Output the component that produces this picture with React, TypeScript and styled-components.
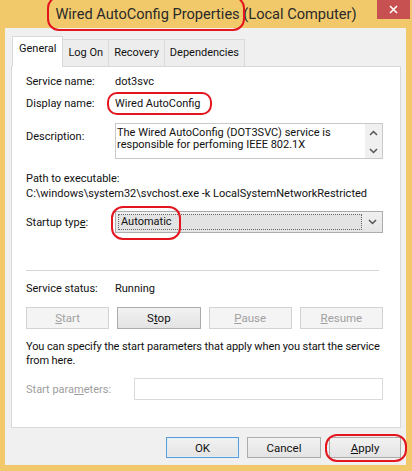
import React from 'react';
import styled, { createGlobalStyle } from 'styled-components';

const Global = createGlobalStyle`
  html, body { margin: 0; padding: 0; background: #F1C96B; }
  body { font-family: Roboto, "Liberation Sans", sans-serif; }
  * { box-sizing: border-box; }
`;

const Window = styled.div`
  width: 412px;
  height: 471px;
  background: #F1C96B;
  display: flex;
  flex-direction: column;
`;

const TitleBar = styled.div`
  height: 28px;
  display: grid;
  grid-template-columns: 1fr auto 1fr;
  align-items: center;
`;

const Title = styled.div`
  grid-column: 2;
  font-size: 14.6px;
  color: #2a2a2a;
  white-space: nowrap;
`;

const CloseButton = styled.div`
  grid-column: 3;
  justify-self: end;
  align-self: start;
  width: 33px;
  height: 19px;
  margin-right: 2px;
  background: #C75050;
  display: flex;
  align-items: center;
  justify-content: center;
`;

const Circled = styled.span<{ $inset: string; $radius?: string }>`
  position: relative;
  display: inline-block;
  &::after {
    content: '';
    position: absolute;
    inset: ${(p) => p.$inset};
    border: 2.5px solid #E3151E;
    border-radius: ${(p) => p.$radius ?? '12px'};
    pointer-events: none;
  }
`;

const Body = styled.div`
  flex: 1;
  margin: 0 6px 6px 5px;
  background: #F0F0F0;
  padding: 8px 5px 0 6px;
  display: flex;
  flex-direction: column;
  font-size: 11px;
  color: #111;
`;

const TabStrip = styled.div`
  display: flex;
  align-items: flex-end;
  padding-left: 1px;
  margin-bottom: -1px;
  position: relative;
  z-index: 1;
`;

const Tab = styled.div<{ $active?: boolean }>`
  height: ${(p) => (p.$active ? '31px' : '28px')};
  padding: ${(p) => (p.$active ? '4px 6px 0' : '5px 5px 0')};
  line-height: 15px;
  background: ${(p) => (p.$active ? '#FFFFFF' : '#EDEDED')};
  border: 1px solid #D9D9D9;
  border-bottom-color: ${(p) => (p.$active ? '#FFFFFF' : '#D9D9D9')};
  margin-left: ${(p) => (p.$active ? '0' : '-1px')};
  color: #111;
`;

const Panel = styled.div`
  height: 362px;
  background: #FFFFFF;
  border: 1px solid #D9D9D9;
  padding: 0 17px 0 14px;
  display: flex;
  flex-direction: column;
`;

const Row = styled.div<{ $top: number; $label?: number; $align?: string }>`
  display: grid;
  grid-template-columns: ${(p) => p.$label ?? 89}px 1fr;
  align-items: ${(p) => p.$align ?? 'center'};
  margin-top: ${(p) => p.$top}px;
  line-height: 15px;
`;

const Label = styled.span<{ $disabled?: boolean; $offset?: number }>`
  color: ${(p) => (p.$disabled ? '#9D9D9D' : '#111')};
  padding-top: ${(p) => p.$offset ?? 0}px;
`;

const Value = styled.span``;

const TextLine = styled.div<{ $top?: number }>`
  margin-top: ${(p) => p.$top ?? 0}px;
  line-height: 15px;
  white-space: nowrap;
`;

const DescBox = styled.div`
  height: 36px;
  border: 1px solid #C9C9C9;
  display: grid;
  grid-template-columns: 1fr 17px;
  overflow: hidden;
`;

const DescText = styled.div`
  padding: 3px 0 0 1px;
  line-height: 11.5px;
  white-space: pre-line;
  overflow: hidden;
`;

const ScrollBar = styled.div`
  background: #F0F0F0;
  display: flex;
  flex-direction: column;
  align-items: center;
  justify-content: space-between;
  padding: 6px 0 4px;
`;

const Combo = styled.div`
  height: 22px;
  border: 1px solid #ACACAC;
  background: linear-gradient(#F0F0F0, #E5E5E5);
  display: grid;
  grid-template-columns: 1fr 20px;
  align-items: center;
  padding: 2px 0 2px 2px;
`;

const ComboField = styled.div`
  height: 16px;
  border: 1px dotted #6a6a6a;
  background: #E3E3E3;
  line-height: 14px;
  padding-left: 2px;
`;

const ComboArrow = styled.div`
  display: flex;
  justify-content: center;
`;

const Separator = styled.div`
  height: 2px;
  margin: 37px 4px 0 0;
  border-top: 1px solid #D5D5D5;
  border-bottom: 1px solid #FFFFFF;
`;

const ButtonRow = styled.div`
  display: grid;
  grid-template-columns: repeat(4, 1fr);
  gap: 8px;
  margin-top: 11px;
`;

const Button = styled.div<{ $variant?: 'normal' | 'default' | 'disabled'; $width?: number }>`
  height: ${(p) => (p.$width ? 21 : 22)}px;
  ${(p) => (p.$width ? `width: ${p.$width}px;` : '')}
  display: flex;
  align-items: center;
  justify-content: center;
  font-size: 11.5px;
  border: 1px solid
    ${(p) =>
      p.$variant === 'disabled' ? '#D3D3D3' : p.$variant === 'default' ? '#5A9BD8' : '#ACACAC'};
  background: ${(p) =>
    p.$variant === 'disabled' ? '#F4F4F4' : 'linear-gradient(#F2F2F2, #E3E3E3)'};
  color: ${(p) => (p.$variant === 'disabled' ? '#A0A0A0' : '#111')};
  ${(p) => (p.$variant === 'default' ? 'box-shadow: inset 0 0 0 1px #E0EEFA;' : '')}
`;

const Paragraph = styled.div`
  margin-top: 11px;
  line-height: 14px;
  white-space: nowrap;
  letter-spacing: -0.1px;
`;

const ParamInput = styled.div`
  height: 22px;
  border: 1px solid #DADADA;
  background: #FFFFFF;
`;

const Footer = styled.div`
  display: flex;
  justify-content: flex-end;
  gap: 8px;
  padding-top: 9px;
`;

const Chevron = ({ up }: { up?: boolean }) => (
  <svg width="9" height="6" viewBox="0 0 9 6">
    <polyline
      points={up ? '1,5 4.5,1.5 8,5' : '1,1 4.5,4.5 8,1'}
      fill="none"
      stroke="#555"
      strokeWidth="1.5"
    />
  </svg>
);

export default function App() {
  return (
    <>
      <Global />
      <Window>
        <TitleBar>
          <Title>
            <Circled $inset="-9px -5px -8px -8px">Wired AutoConfig Properties</Circled> (Local Computer)
          </Title>
          <CloseButton>
            <svg width="9" height="9" viewBox="0 0 9 9">
              <path d="M1 1L8 8M8 1L1 8" stroke="#fff" strokeWidth="1.6" />
            </svg>
          </CloseButton>
        </TitleBar>
        <Body>
          <TabStrip>
            <Tab $active>General</Tab>
            <Tab>Log On</Tab>
            <Tab>Recovery</Tab>
            <Tab>Dependencies</Tab>
          </TabStrip>
          <Panel>
            <Row $top={7}>
              <Label>Service name:</Label>
              <Value>dot3svc</Value>
            </Row>
            <Row $top={7}>
              <Label>Display name:</Label>
              <Value>
                <Circled $inset="-4px -11px -4px -8px" $radius="10px">Wired AutoConfig</Circled>
              </Value>
            </Row>
            <Row $top={12} $align="start">
              <Label $offset={6}>Description:</Label>
              <DescBox>
                <DescText>
                  {'The Wired AutoConfig (DOT3SVC) service is\nresponsible for perfoming IEEE 802.1X'}
                </DescText>
                <ScrollBar>
                  <Chevron up />
                  <Chevron />
                </ScrollBar>
              </DescBox>
            </Row>
            <TextLine $top={12}>Path to executable:</TextLine>
            <TextLine>C:\windows\system32\svchost.exe -k LocalSystemNetworkRestricted</TextLine>
            <Row $top={10}>
              <Label>
                Startup typ<u>e</u>:
              </Label>
              <Combo>
                <ComboField>
                  <Circled $inset="-9px -9px -11px -10px">Automatic</Circled>
                </ComboField>
                <ComboArrow>
                  <Chevron />
                </ComboArrow>
              </Combo>
            </Row>
            <Separator />
            <Row $top={9}>
              <Label>Service status:</Label>
              <Value>Running</Value>
            </Row>
            <ButtonRow>
              <Button $variant="disabled">
                <span>
                  <u>S</u>tart
                </span>
              </Button>
              <Button $variant="normal">
                <span>
                  S<u>t</u>op
                </span>
              </Button>
              <Button $variant="disabled">
                <span>
                  <u>P</u>ause
                </span>
              </Button>
              <Button $variant="disabled">
                <span>
                  <u>R</u>esume
                </span>
              </Button>
            </ButtonRow>
            <Paragraph>
              You can specify the start parameters that apply when you start the service
              <br />
              from here.
            </Paragraph>
            <Row $top={10} $label={108}>
              <Label $disabled>
                Start para<u>m</u>eters:
              </Label>
              <ParamInput />
            </Row>
          </Panel>
          <Footer>
            <Button $variant="default" $width={73}>
              OK
            </Button>
            <Button $variant="normal" $width={74}>
              Cancel
            </Button>
            <Circled $inset="-3px -6px -4px -4px">
              <Button $variant="normal" $width={72}>
                <span>
                  <u>A</u>pply
                </span>
              </Button>
            </Circled>
          </Footer>
        </Body>
      </Window>
    </>
  );
}
